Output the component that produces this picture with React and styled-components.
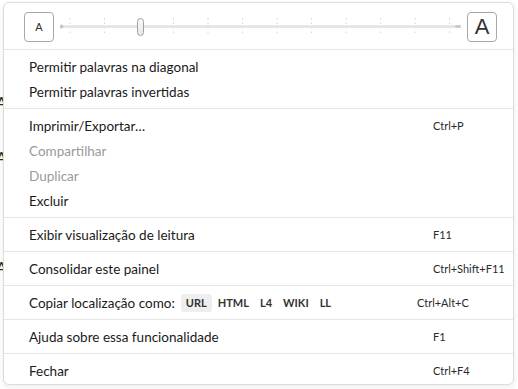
import React from 'react';
import styled, { createGlobalStyle } from 'styled-components';

const GlobalStyle = createGlobalStyle`
  html, body {
    margin: 0;
    padding: 0;
    background: #fff;
    font-family: "Source Sans Pro", Lato, "Liberation Sans", sans-serif;
  }
`

const Page = styled.div`
  position: relative;
  width: 518px;
  height: 389px;
  overflow: hidden;
  background: #fff;
`
const PageText = styled.div`
  padding: 92px 0 0 0;
  display: flex;
  flex-direction: column;
  gap: 36px;
  font-size: 16px;
  color: #3a2a10;
  margin-left: -4px;
`
const Menu = styled.div`
  position: absolute;
  left: 3px;
  top: 2px;
  width: 511px;
  height: 383px;
  background: #fff;
  border: 1px solid #dcdcdc;
  border-radius: 6px;
  box-shadow: 0 2px 6px rgba(0, 0, 0, 0.08);
  box-sizing: border-box;
  display: flex;
  flex-direction: column;
  overflow: hidden;
`
const Header = styled.div`
  display: flex;
  align-items: center;
  flex-shrink: 0;
  height: 47px;
  padding: 1px 16px 0 20px;
  box-sizing: border-box;
  border-bottom: 1px solid #e6e6e6;
  gap: 6px;
`
const SizeButton = styled.div`
  width: 30px;
  height: 30px;
  box-sizing: border-box;
  border: 1px solid #a8a8a8;
  border-radius: 4px;
  display: flex;
  align-items: center;
  justify-content: center;
  font-family: "Liberation Sans", Arial, sans-serif;
  font-size: ${p => (p.big ? '22px' : '11px')};
  color: #333;
  flex-shrink: 0;
`
const Slider = styled.div`
  position: relative;
  flex: 1;
  height: 30px;
  svg {
    display: block;
    width: 100%;
    height: 30px;
  }
`
const Thumb = styled.div`
  position: absolute;
  left: ${p => p.left}px;
  top: 6px;
  width: 7px;
  height: 18px;
  box-sizing: border-box;
  border: 1px solid #a0a0a0;
  border-radius: 4px;
  background: linear-gradient(#fafafa, #e8e8e8);
`
const Group = styled.div`
  flex-shrink: 0;
  padding: ${p => (p.last ? '4px 0 0' : '4px 0')};
  border-bottom: ${p => (p.last ? 'none' : '1px solid #e6e6e6')};
`
const Row = styled.div`
  display: flex;
  align-items: center;
  height: 25px;
  padding-left: 25px;
  font-size: 13.5px;
  color: ${p => (p.disabled ? '#9a9a9a' : '#1a1a1a')};
`
const Label = styled.span`
  flex: 1;
  display: flex;
  align-items: center;
  white-space: nowrap;
`
const Shortcut = styled.span`
  width: ${p => (p.wide ? '96px' : '80px')};
  font-size: 11px;
  color: #2a2a2a;
  white-space: nowrap;
`
const Chips = styled.span`
  display: flex;
  gap: 1px;
  margin-left: 6px;
`
const Chip = styled.span`
  padding: 1px 5px;
  border-radius: 3px;
  font-size: 11px;
  font-weight: 700;
  color: #333;
  background: ${p => (p.active ? '#eeeeee' : 'transparent')};
  line-height: 16px;
`

const ticks = Array.from({ length: 12 }, (_, i) => 10 + i * 34.6);

function SliderTrack() {
  return (
    <svg viewBox="0 0 402 30" preserveAspectRatio="none">
      {ticks.map(x => (
        <line key={x} x1={x} y1="6" x2={x} y2="24" stroke="#d4d4d4" strokeWidth="1" strokeDasharray="1.5 3" />
      ))}
      <rect x="0" y="13" width="404" height="3" rx="1.5" fill="#e6e6e6" />
      <circle cx="1.5" cy="14.5" r="2" fill="#c8c8c8" />
      <rect x="396" y="13" width="6" height="3" rx="1.5" fill="#cccccc" />
    </svg>
  );
}

const groups = [
  [
    { label: 'Permitir palavras na diagonal' },
    { label: 'Permitir palavras invertidas' },
  ],
  [
    { label: 'Imprimir/Exportar…', key: 'Ctrl+P' },
    { label: 'Compartilhar', disabled: true },
    { label: 'Duplicar', disabled: true },
    { label: 'Excluir' },
  ],
  [{ label: 'Exibir visualização de leitura', key: 'F11' }],
  [{ label: 'Consolidar este painel', key: 'Ctrl+Shift+F11' }],
  [{ label: 'Copiar localização como:', key: 'Ctrl+Alt+C', chips: true }],
  [{ label: 'Ajuda sobre essa funcionalidade', key: 'F1' }],
  [{ label: 'Fechar', key: 'Ctrl+F4' }],
];

export default function App() {
  return (
    <Page>
      <GlobalStyle />
      <PageText>
        <span>A</span>
        <span>A</span>
        <span>I</span>
        <span>A</span>
        <span>I</span>
        <span>I</span>
        <span>A</span>
      </PageText>
      <Menu>
        <Header>
          <SizeButton>A</SizeButton>
          <Slider>
            <SliderTrack />
            <Thumb left={77} />
          </Slider>
          <SizeButton big>A</SizeButton>
        </Header>
        {groups.map((items, gi) => (
          <Group key={gi} last={gi === groups.length - 1}>
            {items.map(item => (
              <Row key={item.label} disabled={item.disabled}>
                <Label>
                  {item.label}
                  {item.chips && (
                    <Chips>
                      <Chip active>URL</Chip>
                      <Chip>HTML</Chip>
                      <Chip>L4</Chip>
                      <Chip>WIKI</Chip>
                      <Chip>LL</Chip>
                    </Chips>
                  )}
                </Label>
                <Shortcut wide={item.chips}>{item.key}</Shortcut>
              </Row>
            ))}
          </Group>
        ))}
      </Menu>
    </Page>
  );
}
